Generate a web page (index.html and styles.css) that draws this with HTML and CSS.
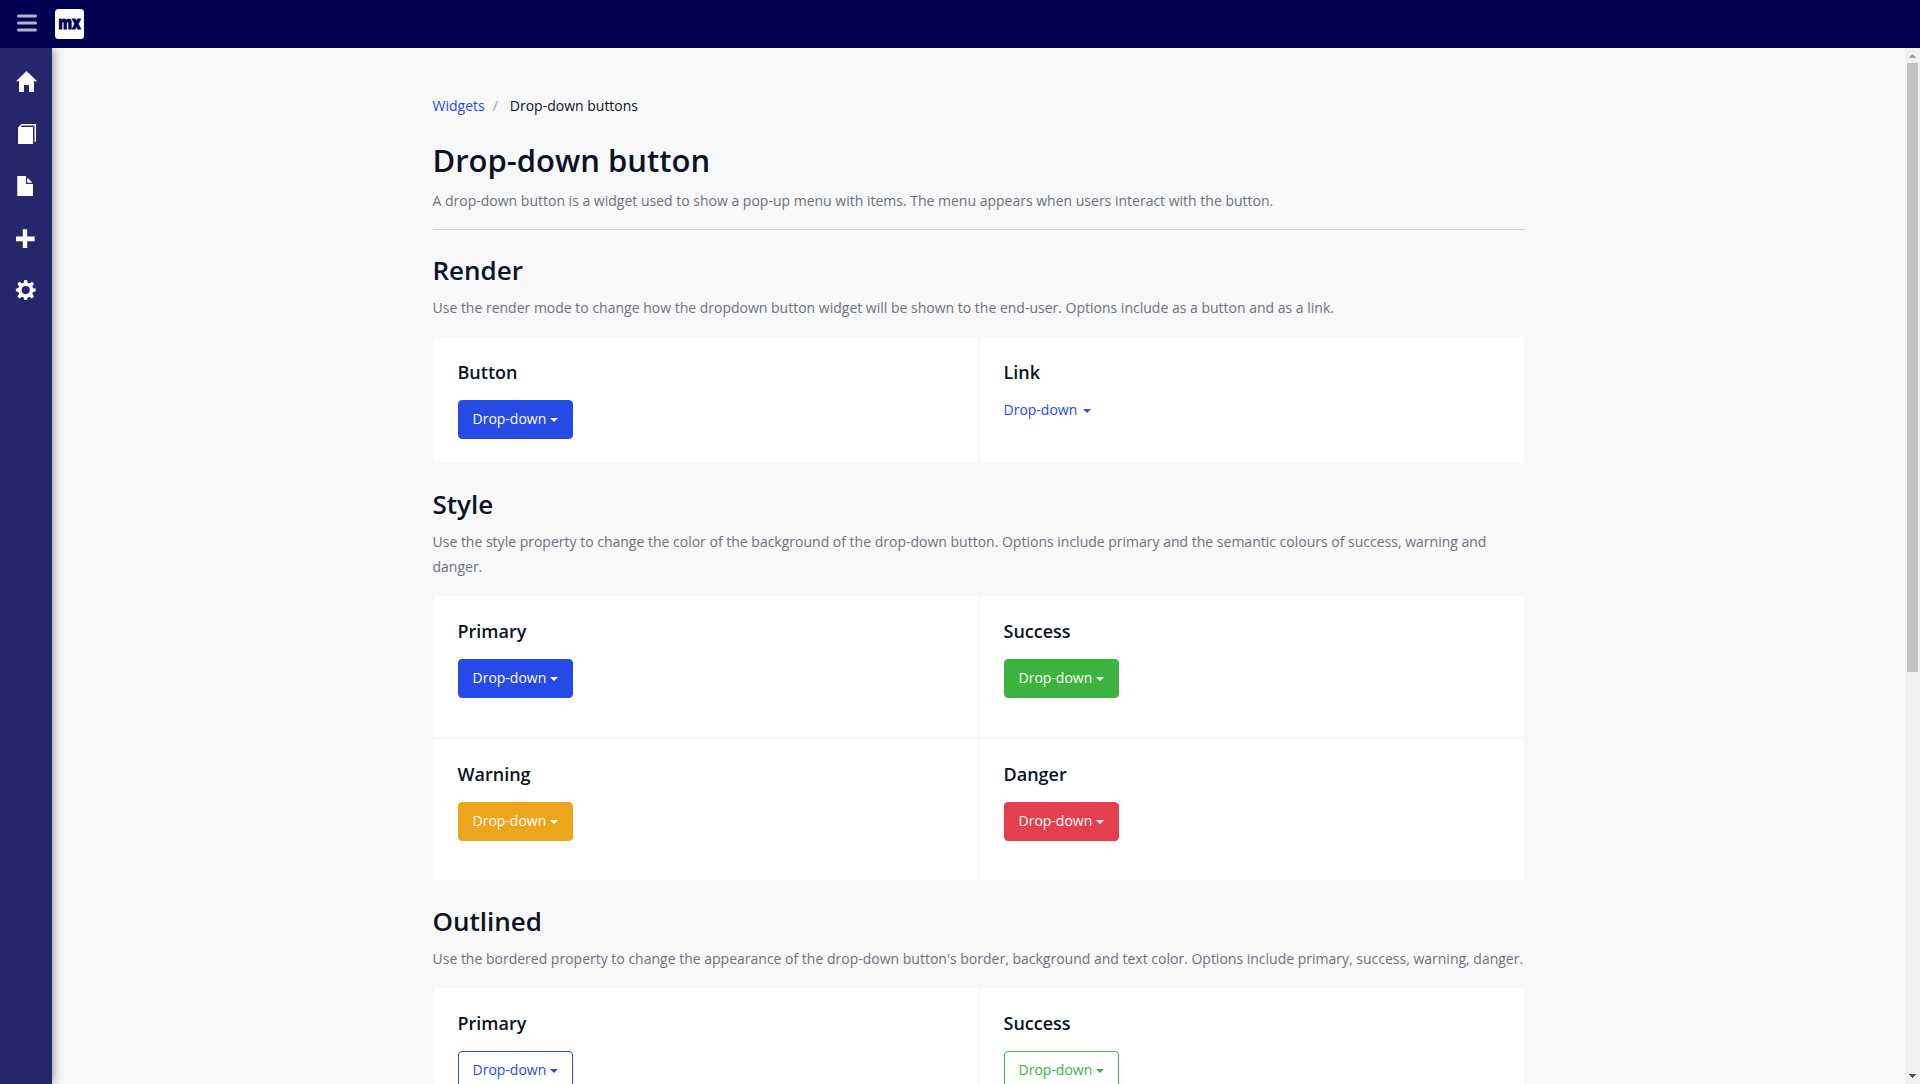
FILE: index.html
```html
<!DOCTYPE html>
<html lang="en">
<head>
<meta charset="utf-8">
<title>Drop-down button</title>
<link rel="stylesheet" href="styles.css">
</head>
<body>
<header class="topbar">
  <svg class="menu-toggle" width="20" height="18" viewBox="0 0 20 18"><path d="M1.5 2h17M1.5 9h17M1.5 16h17" stroke="#b3b3cb" stroke-width="3" stroke-linecap="round"/></svg>
  <svg class="logo" width="29" height="30" viewBox="0 0 29 30"><rect width="29" height="30" rx="3.5" fill="#fff"/><text x="3.2" y="19.700" textLength="22.600" lengthAdjust="spacingAndGlyphs" class="logo-text">mx</text></svg>
</header>
<div class="body">
  <nav class="sidebar">
    <svg viewBox="0 0 52 52"><path d="M26.5 15 37.2 25.3H34V36H29V29H24V36H19V25.3H16Z"/></svg>
    <svg viewBox="0 0 52 52"><path d="M18 19.5 21.5 16H36V33L34.5 34.500V17.500H22L20.500 19H33V36H18Z"/></svg>
    <svg viewBox="0 0 52 52"><path d="M17.300 16H26V24H33V36H17.300ZM27.200 17.500 32.500 22.800H27.200Z"/></svg>
    <svg viewBox="0 0 52 52"><path d="M22.800 17.300h4.400v7.300h7.500v4.600h-7.500v6.800h-4.400v-6.800h-6.800v-4.600h6.800Z"/></svg>
    <svg viewBox="0 0 52 52"><path fill-rule="evenodd" d="M24.300 16h2.800l.6 2.800 1.700.7 2.600-1.700 2 2-1.700 2.600.7 1.700 2.700.6v2.800l-2.700.6-.7 1.700 1.700 2.600-2 2-2.600-1.700-1.700.7-.6 2.600h-2.800l-.6-2.600-1.700-.7-2.600 1.700-2-2 1.700-2.600-.7-1.700-2.500-.6v-2.800l2.500-.6.7-1.700-1.700-2.600 2-2 2.600 1.700 1.700-.7ZM25.700 22a4.100 4.100 0 1 0 0 8.200 4.100 4.100 0 0 0 0-8.200Z"/></svg>
  </nav>
  <main class="page">
    <div class="container">
      <div class="breadcrumb"><a class="crumb-link">Widgets</a><span class="crumb-sep">/</span><span>Drop-down buttons</span></div>
      <h1>Drop-down button</h1>
      <p>A drop-down button is a widget used to show a pop-up menu with items. The menu appears when users interact with the button.</p>
      <hr>
      <section>
        <h2>Render</h2>
        <p>Use the render mode to change how the dropdown button widget will be shown to the end-user. Options include as a button and as a link.</p>
        <div class="cards compact">
          <div class="card"><h4>Button</h4><button class="btn primary">Drop-down<i class="caret"></i></button></div>
          <div class="card"><h4>Link</h4><a class="link">Drop-down<i class="caret"></i></a></div>
        </div>
      </section>
      <section>
        <h2>Style</h2>
        <p>Use the style property to change the color of the background of the drop-down button. Options include primary and the semantic colours of success, warning and danger.</p>
        <div class="cards">
          <div class="card"><h4>Primary</h4><button class="btn primary">Drop-down<i class="caret"></i></button></div>
          <div class="card"><h4>Success</h4><button class="btn success">Drop-down<i class="caret"></i></button></div>
          <div class="card"><h4>Warning</h4><button class="btn warning">Drop-down<i class="caret"></i></button></div>
          <div class="card"><h4>Danger</h4><button class="btn danger">Drop-down<i class="caret"></i></button></div>
        </div>
      </section>
      <section>
        <h2>Outlined</h2>
        <p>Use the bordered property to change the appearance of the drop-down button's border, background and text color. Options include primary, success, warning, danger.</p>
        <div class="cards">
          <div class="card"><h4>Primary</h4><button class="btn outline-primary">Drop-down<i class="caret"></i></button></div>
          <div class="card"><h4>Success</h4><button class="btn outline-success">Drop-down<i class="caret"></i></button></div>
        </div>
      </section>
    </div>
  </main>
  <div class="scrollbar">
    <svg width="15" height="15" viewBox="0 0 15 15" shape-rendering="crispEdges"><path d="M7 6h1v1h1v1h1v1h1v1H4V9h1V8h1V7h1z" fill="#a3a3a3"/></svg>
    <div class="thumb"></div>
    <svg class="down" width="15" height="15" viewBox="0 0 15 15" shape-rendering="crispEdges"><path d="M4 5h7v1h-1v1H9v1H8v1H7V8H6V7H5V6H4z" fill="#505050"/></svg>
  </div>
</div>
</body>
</html>
```

FILE: styles.css
```css
* { box-sizing: border-box; }
body {
  margin: 0;
  height: 1084px;
  overflow: hidden;
  display: flex;
  flex-direction: column;
  background: #f8f8f8;
  color: #0a1325;
  font: 14px/21px "Open Sans", sans-serif;
}
.topbar {
  flex: none;
  height: 48px;
  display: flex;
  align-items: center;
  padding-left: 17px;
  gap: 18px;
  background: #000052;
  position: relative;
  z-index: 2;
}
.menu-toggle { margin-top: -2px; }
.logo-text {
  font: 800 18px "Open Sans", sans-serif;
  fill: #000052;
  stroke: #000052;
  stroke-width: 0.8px;
}
.body { flex: 1; min-height: 0; display: flex; }
.sidebar {
  flex: none;
  width: 52px;
  padding-top: 8px;
  background: #24276c;
  box-shadow: 0 0 10px rgba(0, 0, 0, 0.5);
  position: relative;
  z-index: 1;
}
.sidebar svg { display: block; width: 52px; height: 52px; fill: #fff; }
.page { flex: 1; min-width: 0; overflow: hidden; }
.container { width: 1140px; margin: 0 auto; padding: 47px 24px 0; }
.breadcrumb { display: flex; margin-bottom: 24px; }
.crumb-link { color: #264ae5; }
.crumb-sep { color: #9da1a8; padding: 0 12px 0 8px; }
h1, h2, h4, p { margin: 0; }
h1, h2, h4 { font-weight: 600; }
h1 { font-size: 31px; line-height: 40px; margin-bottom: 8px; }
h2 { font-size: 26px; line-height: 34px; margin-bottom: 8px; }
h4 { font-size: 18px; line-height: 23px; margin-bottom: 16px; }
p { line-height: 25px; color: #6c717e; margin-bottom: 16px; }
hr { margin: 0; border: 0; border-top: 1px solid #ced0d3; }
section { padding-top: 23px; }
.cards { display: grid; grid-template-columns: 1fr 1fr; }
.card {
  height: 143px;
  padding: 24px;
  background: #fff;
  border: 1px solid #f8f8f8;
}
.compact .card { height: 128px; }
.btn {
  display: block;
  height: 39px;
  padding: 0 14px 2px;
  border: 1px solid;
  border-radius: 4px;
  font: inherit;
  color: #fff;
  white-space: nowrap;
}
.caret {
  display: inline-block;
  margin-left: 4px;
  vertical-align: middle;
  border: 4px solid transparent;
  border-top-color: currentColor;
  border-bottom: 0;
}
.primary { background: #264ae5; border-color: #264ae5; }
.success { background: #3cb33d; border-color: #3cb33d; }
.warning { background: #eca51c; border-color: #eca51c; }
.danger { background: #e33f4e; border-color: #e33f4e; }
.outline-primary { background: transparent; color: #264ae5; border-color: #264ae5; }
.outline-success { background: transparent; color: #3cb33d; border-color: #3cb33d; }
.link { display: block; color: #264ae5; margin-top: -1px; }
.link .caret { margin-left: 6px; }
.scrollbar {
  flex: none;
  width: 15px;
  display: flex;
  flex-direction: column;
  background: #f1f1f1;
}
.scrollbar svg { display: block; }
.thumb { width: 11px; height: 609px; margin-left: 2px; background: #c1c1c1; }
.down { margin-top: auto; }
```
